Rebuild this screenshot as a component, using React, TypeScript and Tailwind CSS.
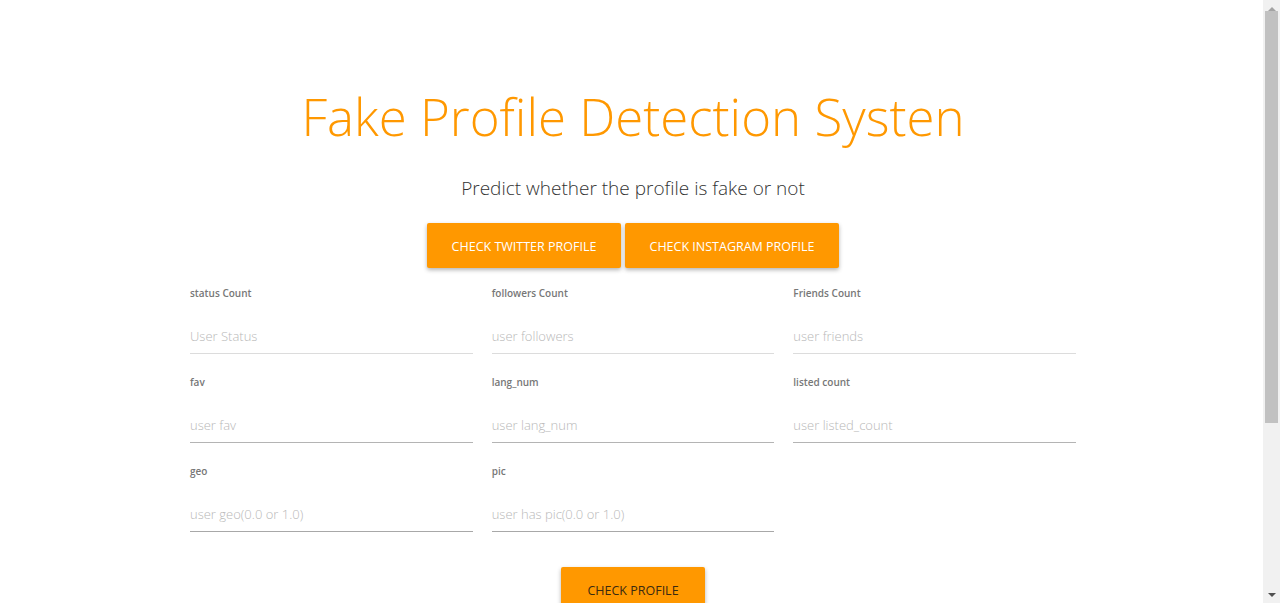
import React from "react";

const fields = [
  { label: "status Count", placeholder: "User Status", line: "border-[#dcdcdc]" },
  { label: "followers Count", placeholder: "user followers", line: "border-[#dcdcdc]" },
  { label: "Friends Count", placeholder: "user friends", line: "border-[#dcdcdc]" },
  { label: "fav", placeholder: "user fav", line: "border-[#b4b4b4]" },
  { label: "lang_num", placeholder: "user lang_num", line: "border-[#b4b4b4]" },
  { label: "listed count", placeholder: "user listed_count", line: "border-[#b4b4b4]" },
  { label: "geo", placeholder: "user geo(0.0 or 1.0)", line: "border-[#a8a8a8]" },
  { label: "pic", placeholder: "user has pic(0.0 or 1.0)", line: "border-[#a8a8a8]" },
];

function Scrollbar() {
  return (
    <aside className="sticky top-0 flex h-[603px] w-[17px] shrink-0 flex-col bg-[#f1f1f1]">
      <div className="flex h-[17px] items-center justify-center">
        <div className="h-0 w-0 border-x-[4px] border-b-[4px] border-x-transparent border-b-[#a3a3a3]" />
      </div>
      <div className="mx-[2px] mt-[-6px] h-[412px] bg-[#c1c1c1]" />
      <div className="flex-1" />
      <div className="flex h-[17px] items-center justify-center">
        <div className="h-0 w-0 border-x-[4px] border-t-[4px] border-x-transparent border-t-[#505050]" />
      </div>
    </aside>
  );
}

export default function App() {
  return (
    <div className="flex items-start bg-white font-['Open_Sans','Noto_Sans',sans-serif]">
      <main className="min-h-[853px] flex-1 pl-[3px]">
        <div className="flex flex-col items-center pt-[80px]">
          <h1 className="text-[51px] font-light leading-[72px] text-[#ff9800]">
            Fake Profile Detection Systen
          </h1>
          <p className="mt-[22px] text-[19px] font-light leading-[28px] text-[#333]">
            Predict whether the profile is fake or not
          </p>
          <div className="mt-[21px] flex gap-[4px]">
            <button className="h-[45px] w-[194px] rounded-[2px] bg-[#ff9800] pt-[3px] text-[12.5px] uppercase text-white shadow-[0_2px_4px_rgba(0,0,0,0.3)]">
              Check Twitter Profile
            </button>
            <button className="h-[45px] w-[214px] rounded-[2px] bg-[#ff9800] pt-[3px] text-[12.5px] uppercase text-white shadow-[0_2px_4px_rgba(0,0,0,0.3)]">
              Check Instagram Profile
            </button>
          </div>
        </div>

        <div className="mx-auto mt-[15px] grid w-[886px] grid-cols-3 gap-x-[19px]">
          {fields.map((f) => (
            <div key={f.label} className="h-[89px]">
              <label className="block pt-[2px] text-[10px] font-semibold leading-[16px] text-[#777]">
                {f.label}
              </label>
              <input
                placeholder={f.placeholder}
                className={`mt-[26px] block w-full border-b pb-[8px] text-[13px] font-light leading-[18px] outline-none placeholder:text-[#b8b8b8] ${f.line}`}
              />
            </div>
          ))}
        </div>

        <div className="mt-[17px] flex justify-center">
          <button className="h-[45px] w-[144px] rounded-[2px] bg-[#ff9800] pt-[3px] text-[12.5px] uppercase text-[#3a2a10] shadow-[0_2px_4px_rgba(0,0,0,0.3)]">
            Check Profile
          </button>
        </div>
      </main>
      <Scrollbar />
    </div>
  );
}
